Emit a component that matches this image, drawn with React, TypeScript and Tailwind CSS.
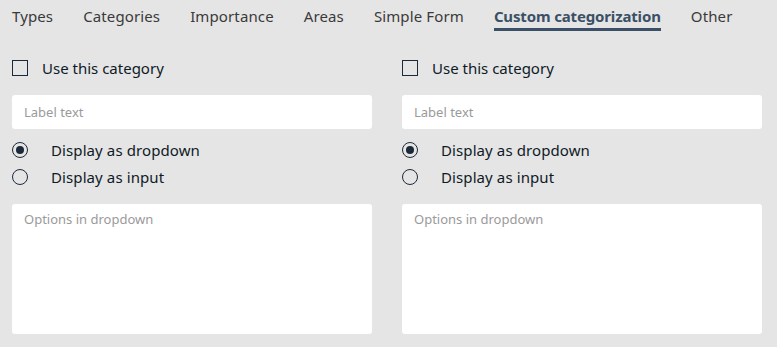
import React from 'react';

const tabs = ['Types', 'Categories', 'Importance', 'Areas', 'Simple Form', 'Custom categorization', 'Other'];

function CategoryColumn() {
    return (
        <div className="flex flex-col">
            <label className="flex items-center h-[16px]">
                <span className="block w-[16px] h-[16px] border-[1.5px] border-[#1b2a3a] bg-transparent" />
                <span className="ml-[14px] text-[15px] text-[#0f1a26] leading-none">Use this category</span>
            </label>
            <div className="mt-[19px] h-[34px] bg-white rounded-[3px] flex items-center px-[12px]">
                <span className="text-[13px] leading-[18px] text-[#9a9a9a]">Label text</span>
            </div>
            <div className="mt-[13px] flex items-center h-[16px]">
                <span className="w-[16px] h-[16px] rounded-full border-[1.5px] border-[#1b2a3a] flex items-center justify-center">
                    <span className="w-[8px] h-[8px] rounded-full bg-[#1b2a3a]" />
                </span>
                <span className="ml-[23px] text-[15px] tracking-[0.1px] text-[#0f1a26] leading-none">Display as dropdown</span>
            </div>
            <div className="mt-[11px] flex items-center h-[16px]">
                <span className="w-[16px] h-[16px] rounded-full border-[1.5px] border-[#1b2a3a]" />
                <span className="ml-[23px] text-[15px] tracking-[0.1px] text-[#0f1a26] leading-none">Display as input</span>
            </div>
            <div className="mt-[19px] h-[130px] bg-white rounded-[3px] px-[12px] pt-[6px]">
                <span className="block text-[13px] leading-[18px] text-[#9a9a9a]">Options in dropdown</span>
            </div>
        </div>
    );
}

function App() {
    return (
        <div className="w-[777px] h-[347px] bg-[#e5e5e5] overflow-hidden" style={{ fontFamily: '"Noto Sans", sans-serif' }}>
            {/* tabs */}
            <div className="flex pl-[12px] pt-[5px] gap-[30px] h-[60px]">
                {tabs.map((tab) => (
                    <div key={tab} className="flex flex-col">
                        <span
                            className={
                                tab === 'Custom categorization'
                                    ? 'text-[15px] leading-[22px] font-bold tracking-[-0.15px] text-[#3b5066]'
                                    : 'text-[15px] leading-[22px] tracking-[0.12px] text-[#3a3a3a]'
                            }>
                            {tab}
                        </span>
                        {tab === 'Custom categorization' && <span className="block h-[3px] mt-[1px] bg-[#3b5066]" />}
                    </div>
                ))}
            </div>
            {/* two columns */}
            <div className="px-[12px] grid grid-cols-[360px_360px] gap-[30px]">
                <CategoryColumn />
                <CategoryColumn />
            </div>
        </div>
    );
}

export default App;
